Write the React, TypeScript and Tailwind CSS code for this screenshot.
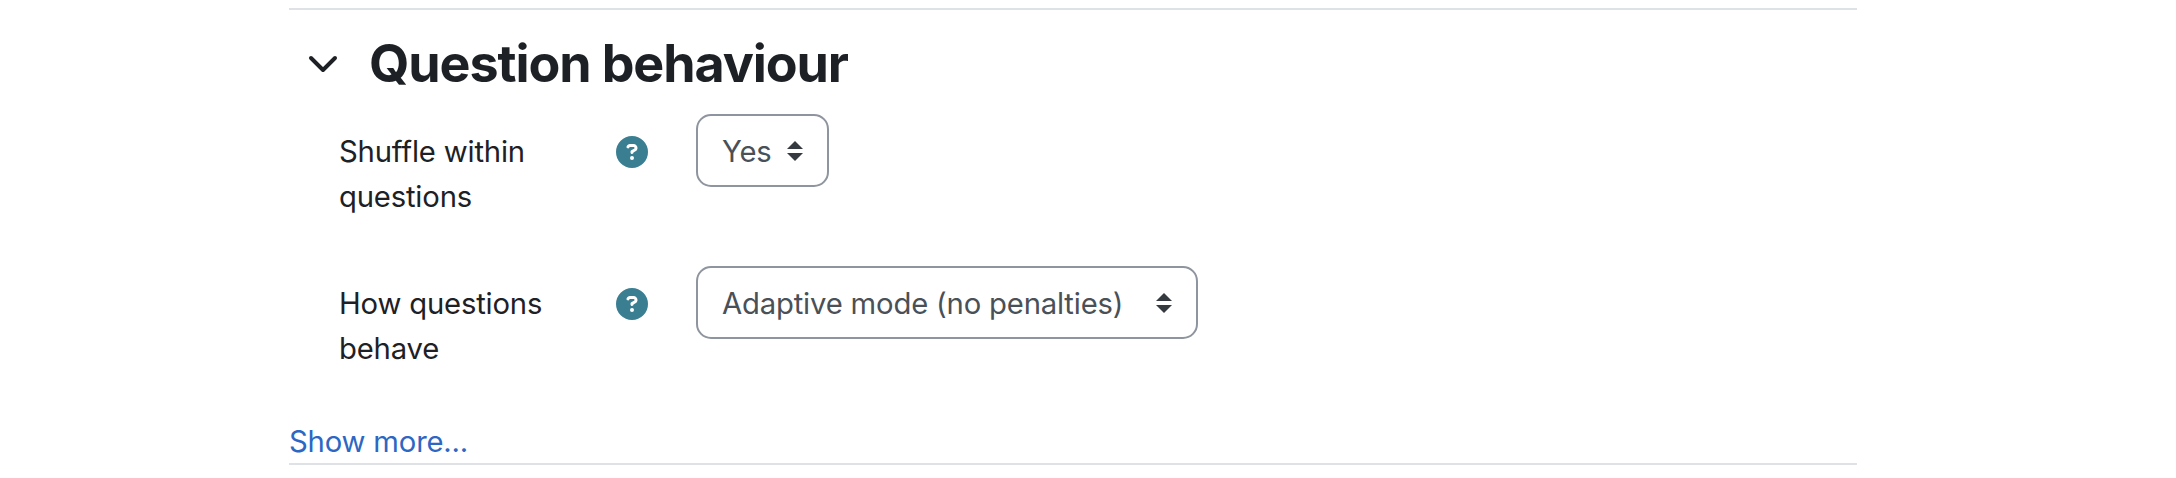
import React from "react";
import { FaCircleQuestion } from "react-icons/fa6";

function Select({ text, className }: { text: string; className: string }) {
  return (
    <div className={"flex h-[73px] items-center justify-between rounded-[15px] border-2 border-[#8f959e] bg-white pl-6 pr-6 " + className}>
      <span className="whitespace-nowrap pt-0.5">{text}</span>
      <svg className="h-5 w-4" viewBox="0 0 16 20" fill="#343a40">
        <path d="M8 0 16 8H0zM8 20 0 12h16z" />
      </svg>
    </div>
  );
}

function Row({ label, children }: { label: string; children: React.ReactNode }) {
  return (
    <div className="flex h-[152px] items-start pl-[50px]">
      <div className="w-[277px] pt-[15px] text-[#1d2125]"><div className="w-[220px]">{label}</div></div>
      <div className="w-[80px] pt-[22px]"><FaCircleQuestion className="block h-8 w-8 text-[#3a7e92]" /></div>
      {children}
    </div>
  );
}

export default function App() {
  return (
    <div className="h-[478px] bg-white pt-2 font-[Inter,sans-serif] text-[29.25px] leading-[45px] tracking-[-0.18px]">
      <div className="ml-[289px] h-[457px] w-[1568px] border-y-2 border-[#dee2e6]">
        <div className="flex h-[104px] items-start pl-[19px] pt-[31px]">
          <svg className="mt-[14px] h-[18px] w-[30px]" viewBox="0 0 30 18" fill="none" stroke="#1d2125" strokeWidth="4" strokeLinecap="round" strokeLinejoin="round"><path d="M3 3 15 15 27 3" /></svg>
          <h3 className="ml-[31px] text-[52px] font-bold tracking-[-1.1px] text-[#1d2125]">Question behaviour</h3>
        </div>
        <Row label="Shuffle within questions"><Select text="Yes" className="w-[133px] text-[#495057]" /></Row>
        <Row label="How questions behave"><Select text="Adaptive mode (no penalties)" className="w-[502px] text-[#495057]" /></Row>
        <a className="block pt-[1px] text-[#2d67c3]">Show more...</a>
      </div>
    </div>
  );
}
